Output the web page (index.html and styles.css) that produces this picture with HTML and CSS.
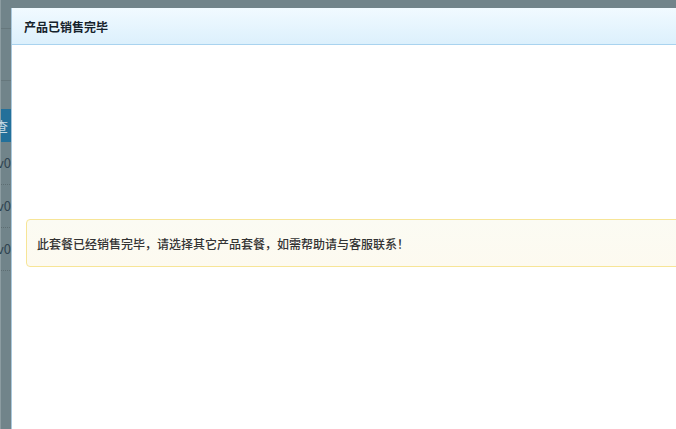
FILE: index.html
```html
<!DOCTYPE html>
<html lang="zh-CN">
<head>
    <meta charset="UTF-8">
    <meta name="viewport" content="width=device-width, initial-scale=1.0">
    <title>产品已销售完毕</title>
    <link rel="stylesheet" href="styles.css">
</head>
<body>
    <div class="page">
        <div class="topbar"></div>
        <div class="subbar"></div>
        <div class="table">
            <div class="thead">查</div>
            <div class="row">v0</div>
            <div class="row">v0</div>
            <div class="row">v0</div>
        </div>
    </div>
    <div class="dialog">
        <div class="dialog-header">
            <h3>产品已销售完毕</h3>
        </div>
        <div class="dialog-body">
            <div class="alert">此套餐已经销售完毕，请选择其它产品套餐，如需帮助请与客服联系！</div>
        </div>
    </div>
</body>
</html>
```

FILE: styles.css
```css
body {
    margin: 0;
    padding: 0;
    font-family: "Noto Sans CJK SC", "Liberation Sans", sans-serif;
    background-color: #71848a;
    color: #333;
    overflow: hidden;
}
.page {
    border-left: 1px solid #8c9ca1;
    height: 429px;
    box-sizing: border-box;
}
.topbar {
    height: 28px;
    border-bottom: 1px solid #66777c;
}
.subbar {
    height: 51px;
    border-bottom: 1px solid #66777c;
}
.table {
    margin-top: 28px;
}
.thead {
    height: 33px;
    line-height: 33px;
    background-color: #23709a;
    color: #c9dbe4;
    font-size: 13px;
    text-indent: -6px;
}
.row {
    height: 42px;
    line-height: 42px;
    border-bottom: 1px dotted #5d6d72;
    color: #2f4350;
    font-size: 13px;
    text-indent: -4px;
}
.dialog {
    position: absolute;
    left: 11px;
    top: 8px;
    right: -40px;
    bottom: -40px;
    background-color: #fff;
    border-left: 1px solid #a9c8dc;
}
.dialog-header {
    height: 36px;
    background: linear-gradient(to bottom, #f1faff, #dcf0fc);
    border-bottom: 1px solid #a9d3ef;
    padding: 0 12px;
    display: flex;
    align-items: center;
}
.dialog-header h3 {
    margin: 0;
    font-size: 12px;
    font-weight: bold;
    color: #15222b;
}
.dialog-body {
    padding: 174px 0 0 14px;
}
.alert {
    height: 46px;
    display: flex;
    align-items: center;
    padding-left: 10px;
    background: linear-gradient(to bottom, #fbfbf3, #fdfaf0);
    border: 1px solid #f7e597;
    border-radius: 4px;
    font-size: 12px;
    font-weight: 500;
    color: #333;
}
```
